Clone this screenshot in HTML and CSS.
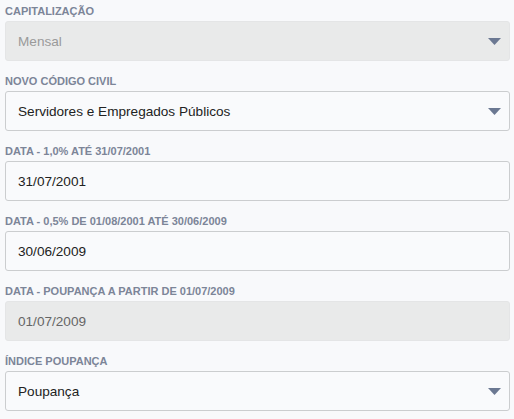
FILE: index.html
```html
<!DOCTYPE html>
<html lang="pt-BR">
<head>
<meta charset="utf-8">
<link rel="stylesheet" href="styles.css">
</head>
<body>
<div class="form">
  <div class="group">
    <label class="label">Capitalização</label>
    <div class="field disabled placeholder">
      <span>Mensal</span>
      <svg class="caret" width="13" height="7" viewBox="0 0 13 7"><path d="M0 0H13L6.5 7Z"/></svg>
    </div>
  </div>
  <div class="group">
    <label class="label">Novo Código Civil</label>
    <div class="field">
      <span>Servidores e Empregados Públicos</span>
      <svg class="caret" width="13" height="7" viewBox="0 0 13 7"><path d="M0 0H13L6.5 7Z"/></svg>
    </div>
  </div>
  <div class="group">
    <label class="label">Data - 1,0% até 31/07/2001</label>
    <div class="field"><span>31/07/2001</span></div>
  </div>
  <div class="group">
    <label class="label">Data - 0,5% de 01/08/2001 até 30/06/2009</label>
    <div class="field"><span>30/06/2009</span></div>
  </div>
  <div class="group">
    <label class="label">Data - Poupança a partir de 01/07/2009</label>
    <div class="field disabled"><span>01/07/2009</span></div>
  </div>
  <div class="group">
    <label class="label">Índice Poupança</label>
    <div class="field">
      <span>Poupança</span>
      <svg class="caret" width="13" height="7" viewBox="0 0 13 7"><path d="M0 0H13L6.5 7Z"/></svg>
    </div>
  </div>
</div>
</body>
</html>
```
FILE: styles.css
```css
html, body {
  margin: 0;
  padding: 0;
  background: #f8f9fb;
}
body {
  font-family: "Liberation Sans", Arial, sans-serif;
}
.form {
  display: flex;
  flex-direction: column;
  gap: 9px;
  padding: 0 4px 0 5px;
}
.group {
  display: flex;
  flex-direction: column;
}
.label {
  display: block;
  height: 21px;
  line-height: 22px;
  font-size: 11px;
  font-weight: bold;
  text-transform: uppercase;
  color: #7c8598;
}
.field {
  box-sizing: border-box;
  height: 40px;
  display: flex;
  align-items: center;
  justify-content: space-between;
  padding: 0 12px 0 12px;
  border: 1px solid #cbcdcf;
  border-radius: 3px;
  background: #f9fafc;
  font-size: 13.6px;
  color: #222;
}
.field.disabled {
  background: #e9eaea;
  border-color: #e4e5e6;
  color: #666;
}
.field.placeholder {
  color: #9a9a9a;
}
.caret {
  fill: #6b7892;
  margin-right: -4px;
}
```
